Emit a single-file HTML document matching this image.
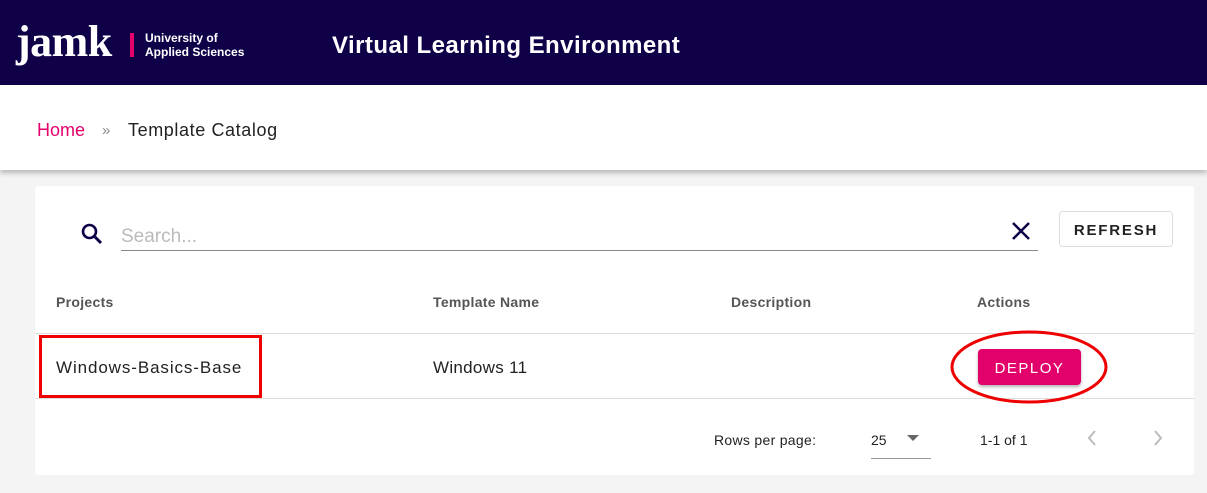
<!DOCTYPE html>
<html><head><style>
*{margin:0;padding:0;box-sizing:border-box}
body{width:1207px;height:493px;background:#f4f4f4;font-family:"Liberation Sans",sans-serif;position:relative;overflow:hidden}
.hdr{position:absolute;left:0;top:0;width:1207px;height:85px;background:#0f0048}
.bc{position:absolute;left:0;top:85px;width:1207px;height:85px;background:#fff;box-shadow:0 3px 5px rgba(0,0,0,.25)}
.card{position:absolute;left:35px;top:186px;width:1159px;height:289px;background:#fff;border-radius:3px}
.a{position:absolute;white-space:nowrap}
.line{position:absolute;height:1px;background:#ddd}
</style></head><body>
<div class="hdr">
 <div class="a" style="left:16px;top:20px;color:#fff;font-family:'Liberation Serif',serif;font-size:44px;font-weight:bold;letter-spacing:-0.5px;line-height:44px">jamk</div>
 <div class="a" style="left:130px;top:33px;width:4px;height:24px;background:#e5006a"></div>
 <div class="a" style="left:145px;top:31px;color:#fff;font-size:12px;font-weight:bold;line-height:14px">University of<br>Applied Sciences</div>
 <div class="a" style="left:332px;top:31px;color:#fff;font-size:24px;line-height:30px;letter-spacing:0.45px;font-weight:bold">Virtual Learning Environment</div>
</div>
<div class="bc">
 <div class="a" style="left:37px;top:35px;font-size:18px;color:#e5006a">Home</div>
 <div class="a" style="left:102px;top:37px;font-size:15px;color:#888">»</div>
 <div class="a" style="left:128px;top:35px;font-size:18px;color:#222;letter-spacing:0.6px">Template Catalog</div>
</div>
<div class="card">
 <svg class="a" style="left:45px;top:36px" width="24" height="24" viewBox="0 0 24 24"><circle cx="9.5" cy="9.5" r="6.5" fill="none" stroke="#0f0048" stroke-width="2.6"/><path d="M14 14l7 7" stroke="#0f0048" stroke-width="3"/></svg>
 <div class="a" style="left:86px;top:40px;font-size:19px;color:#bbb">Search...</div>
 <div class="line" style="left:86px;top:64px;width:917px;background:#888"></div>
 <svg class="a" style="left:975px;top:34px" width="22" height="22" viewBox="0 0 22 22"><path d="M3 3l16 16M19 3L3 19" stroke="#0f0048" stroke-width="2.5"/></svg>
 <div class="a" style="left:1024px;top:25px;width:114px;height:36px;border:1px solid #ddd;border-radius:4px;font-size:15px;letter-spacing:1.8px;color:#222;text-align:center;line-height:38px;font-weight:bold">REFRESH</div>
 <div class="a" style="left:21px;top:108px;font-size:14px;font-weight:bold;color:#555;letter-spacing:0.3px">Projects</div>
 <div class="a" style="left:398px;top:108px;font-size:14px;font-weight:bold;color:#555;letter-spacing:0.3px">Template Name</div>
 <div class="a" style="left:696px;top:108px;font-size:14px;font-weight:bold;color:#555;letter-spacing:0.3px">Description</div>
 <div class="a" style="left:942px;top:108px;font-size:14px;font-weight:bold;color:#555;letter-spacing:0.3px">Actions</div>
 <div class="line" style="left:0;top:147px;width:1159px"></div>
 <div class="a" style="left:21px;top:172px;font-size:17px;color:#222;letter-spacing:0.9px">Windows-Basics-Base</div>
 <div class="a" style="left:398px;top:172px;font-size:17px;color:#222;letter-spacing:0.3px">Windows 11</div>
 <div class="a" style="left:943px;top:163px;width:103px;height:36px;background:#e2006a;border-radius:4px;box-shadow:0 2px 3px rgba(0,0,0,.3);color:#fff;font-size:15px;letter-spacing:1.5px;text-align:center;line-height:39px">DEPLOY</div>
 <div class="line" style="left:0;top:212px;width:1159px"></div>
 <div class="a" style="left:679px;top:246px;font-size:14px;color:#222;letter-spacing:0.3px">Rows per page:</div>
 <div class="a" style="left:836px;top:246px;font-size:14px;color:#222">25</div>
 <div class="a" style="left:872px;top:249px;width:0;height:0;border-left:6px solid transparent;border-right:6px solid transparent;border-top:6px solid #666"></div>
 <div class="line" style="left:836px;top:272px;width:60px;background:#999"></div>
 <div class="a" style="left:945px;top:246px;font-size:14px;color:#222">1-1 of 1</div>
 <svg class="a" style="left:1050px;top:243px" width="14" height="18" viewBox="0 0 14 18"><path d="M10 2L4 9l6 7" fill="none" stroke="#bbb" stroke-width="2"/></svg>
 <svg class="a" style="left:1116px;top:243px" width="14" height="18" viewBox="0 0 14 18"><path d="M4 2l6 7-6 7" fill="none" stroke="#bbb" stroke-width="2"/></svg>
</div>
<div class="a" style="left:39px;top:335px;width:223px;height:63px;border:3px solid #e00"></div>
<svg class="a" style="left:950px;top:330px" width="160" height="74"><ellipse cx="79" cy="37" rx="77" ry="35" fill="none" stroke="#e00" stroke-width="3"/></svg>
</body></html>
